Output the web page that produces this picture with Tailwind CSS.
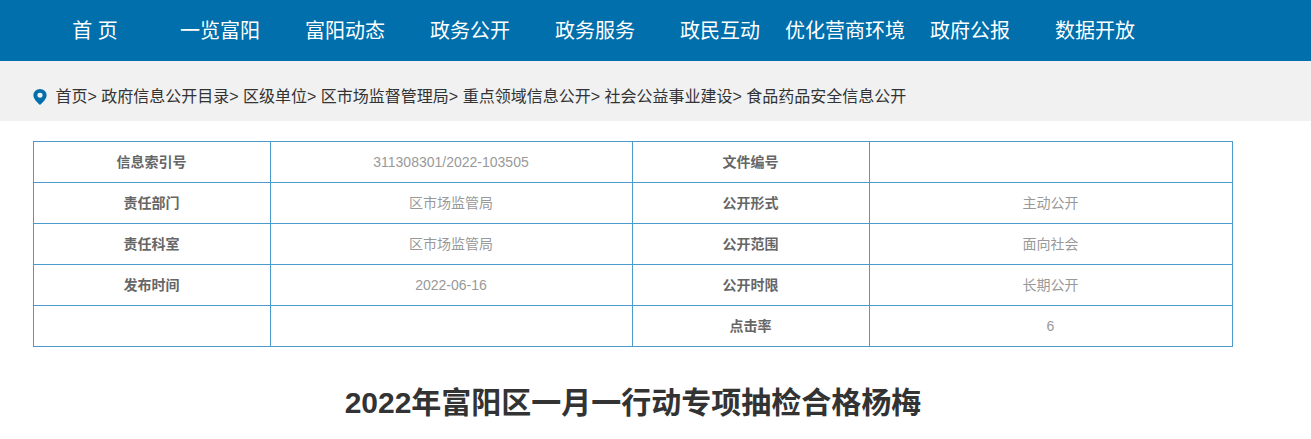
<!DOCTYPE html>
<html lang="zh-CN">
<head>
    <meta charset="UTF-8">
    <title>2022年富阳区一月一行动专项抽检合格杨梅</title>
    <script src="https://cdn.jsdelivr.net/npm/@tailwindcss/browser@4"></script>
</head>
<body class="bg-white overflow-hidden font-['Liberation_Sans','Noto_Sans_CJK_SC',sans-serif]">

    <!-- Nav -->
    <nav class="h-[61px] bg-[#006fac] pl-[32.5px] flex items-center text-white text-[20px]">
        <a class="w-[125px] text-center">首 页</a>
        <a class="w-[125px] text-center">一览富阳</a>
        <a class="w-[125px] text-center">富阳动态</a>
        <a class="w-[125px] text-center">政务公开</a>
        <a class="w-[125px] text-center">政务服务</a>
        <a class="w-[125px] text-center">政民互动</a>
        <a class="w-[125px] text-center">优化营商环境</a>
        <a class="w-[125px] text-center">政府公报</a>
        <a class="w-[125px] text-center">数据开放</a>
    </nav>

    <!-- Breadcrumb -->
    <div class="h-[60px] bg-[#f1f1f1] pl-[33px] pt-[11px] flex items-center text-[16px] text-[#333]">
        <svg class="w-[14px] h-[16px] mr-[8.5px]" viewBox="0 0 14 17" preserveAspectRatio="none">
            <path fill="#006fac" fill-rule="evenodd" d="M7 0a6.6 6.6 0 0 1 6.6 6.6C13.6 10.6 9.6 14.4 7 17 4.400 14.400.4 10.600.4 6.600A6.600 6.600 0 0 1 7 0Zm0 4a2.600 2.600 0 1 0 0 5.200A2.600 2.600 0 0 0 7 4Z"/>
        </svg>
        <span class="whitespace-pre">首页&gt; 政府信息公开目录&gt; 区级单位&gt; 区市场监督管理局&gt; 重点领域信息公开&gt; 社会公益事业建设&gt; 食品药品安全信息公开</span>
    </div>

    <!-- Info table -->
    <div class="ml-[33px] mt-[20px] w-[1200px]">
        <table class="w-full table-fixed border-collapse text-[14px] text-center">
            <colgroup>
                <col class="w-[237px]">
                <col class="w-[362px]">
                <col class="w-[237px]">
                <col>
            </colgroup>
            <tbody>
                <tr class="h-[41px]">
                    <td class="border border-[#4a9acb] pr-px font-bold text-[#666]">信息索引号</td>
                    <td class="border border-[#4a9acb] pr-px text-[#999]">311308301/2022-103505</td>
                    <td class="border border-[#4a9acb] pr-px font-bold text-[#666]">文件编号</td>
                    <td class="border border-[#4a9acb] pr-px text-[#999]"></td>
                </tr>
                <tr class="h-[41px]">
                    <td class="border border-[#4a9acb] pr-px font-bold text-[#666]">责任部门</td>
                    <td class="border border-[#4a9acb] pr-px text-[#999]">区市场监管局</td>
                    <td class="border border-[#4a9acb] pr-px font-bold text-[#666]">公开形式</td>
                    <td class="border border-[#4a9acb] pr-px text-[#999]">主动公开</td>
                </tr>
                <tr class="h-[41px]">
                    <td class="border border-[#4a9acb] pr-px font-bold text-[#666]">责任科室</td>
                    <td class="border border-[#4a9acb] pr-px text-[#999]">区市场监管局</td>
                    <td class="border border-[#4a9acb] pr-px font-bold text-[#666]">公开范围</td>
                    <td class="border border-[#4a9acb] pr-px text-[#999]">面向社会</td>
                </tr>
                <tr class="h-[41px]">
                    <td class="border border-[#4a9acb] pr-px font-bold text-[#666]">发布时间</td>
                    <td class="border border-[#4a9acb] pr-px text-[#999]">2022-06-16</td>
                    <td class="border border-[#4a9acb] pr-px font-bold text-[#666]">公开时限</td>
                    <td class="border border-[#4a9acb] pr-px text-[#999]">长期公开</td>
                </tr>
                <tr class="h-[41px]">
                    <td class="border border-[#4a9acb]"></td>
                    <td class="border border-[#4a9acb]"></td>
                    <td class="border border-[#4a9acb] pr-px font-bold text-[#666]">点击率</td>
                    <td class="border border-[#4a9acb] pr-px text-[#999]">6</td>
                </tr>
            </tbody>
        </table>
        <h1 class="mt-[33px] text-center text-[30px] leading-[46px] font-bold text-[#333]">2022年富阳区一月一行动专项抽检合格杨梅</h1>
    </div>
</body>
</html>
